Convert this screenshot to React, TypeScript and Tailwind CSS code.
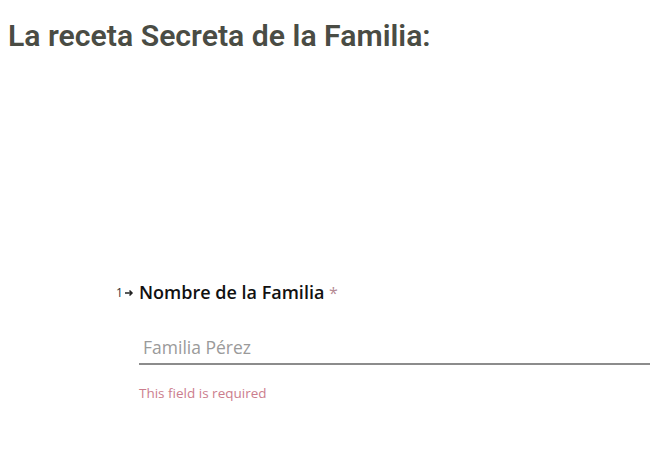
import React from 'react';

export default function App() {
  return (
    <div className="w-[650px] h-[454px] overflow-hidden bg-white">
      <h1 className="pl-2 pt-[16px] text-[30.2px] leading-[40px] font-semibold text-[#4a4c44] font-['Roboto',sans-serif]">
        La receta Secreta de la Familia:
      </h1>

      <div className="mt-[223px] ml-[116px] font-['Open_Sans',sans-serif]">
        <div className="flex items-center">
          <span className="w-[23px] flex items-center text-[12px] text-[#333] gap-[1px]">
            1
            <svg width="10" height="10" viewBox="0 0 10 10" className="mt-[1px]">
              <path d="M1 5h7M5.5 2.5 8 5l-2.5 2.5" fill="none" stroke="#222" strokeWidth="1.5" />
            </svg>
          </span>
          <span className="text-[18px] leading-[26px] font-semibold text-[#111]">
            Nombre de la Familia <span className="text-[#b58a94] text-[16px] font-normal">*</span>
          </span>
        </div>

        <div className="ml-[23px] mt-[27px] w-[520px] border-b-2 border-[#8c8c8c] pb-[2px]">
          <input
            className="w-full text-[17.5px] leading-[28px] pl-[4px] text-[#333] placeholder:text-[#9a9a9a] outline-none bg-transparent"
            placeholder="Familia Pérez"
          />
        </div>

        <p className="ml-[23px] mt-[18px] text-[13.5px] text-[#cb7d8d]">This field is required</p>
      </div>
    </div>
  );
}
